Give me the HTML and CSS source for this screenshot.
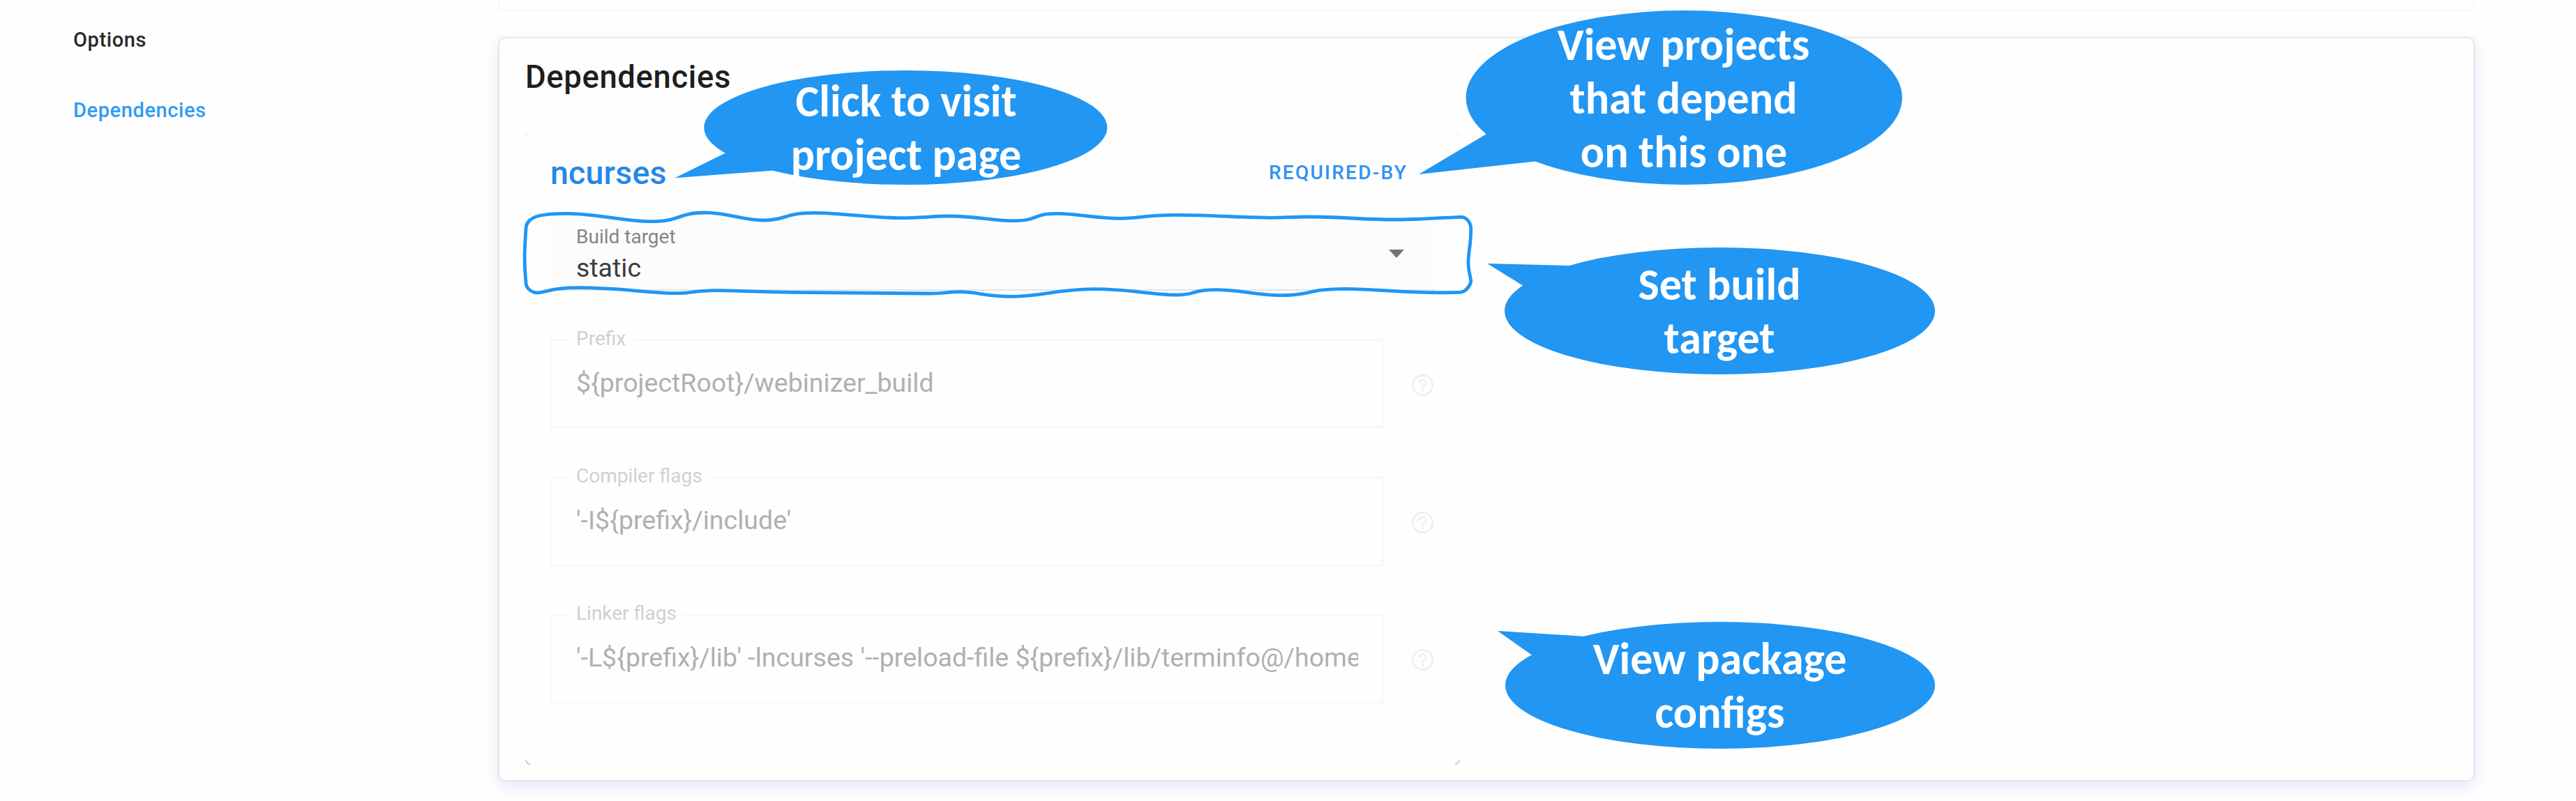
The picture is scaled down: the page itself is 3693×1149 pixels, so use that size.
FILE: index.html
```html
<!DOCTYPE html>
<html lang="en">
<head>
<meta charset="utf-8">
<title>Dependencies</title>
<link rel="stylesheet" href="styles.css">
</head>
<body>
<svg width="0" height="0" class="defs">
  <symbol id="help" viewBox="2 2 20 20"><path d="M11 18h2v-2h-2v2zm1-16C6.480 2 2 6.480 2 12s4.480 10 10 10 10-4.480 10-10S17.520 2 12 2zm0 18.300c-4.580 0-8.300-3.720-8.300-8.300S7.420 3.700 12 3.700s8.300 3.720 8.300 8.300-3.720 8.300-8.300 8.300zM12 6c-2.210 0-4 1.790-4 4h1.700c0-1.270 1.030-2.300 2.300-2.300s2.300 1.030 2.300 2.300c0 1.900-3.150 1.750-3.150 5h1.700c0-2.250 3.150-2.500 3.150-5 0-2.210-1.790-4-4-4z"/></symbol>
</svg>
<nav class="sidebar">
  <a class="nav-item">Options</a>
  <a class="nav-item active">Dependencies</a>
</nav>
<main class="content">
  <section class="card card-prev"></section>
  <section class="card card-main">
    <h2 class="card-title">Dependencies</h2>
    <div class="package">
      <i class="corner tl"></i><i class="corner tr"></i><i class="corner bl"></i><i class="corner br"></i>
      <header class="package-head">
        <a class="package-name">ncurses</a>
        <a class="required-by">REQUIRED-BY</a>
      </header>
      <div class="select">
        <div class="select-text">
          <span class="select-label">Build target</span>
          <span class="select-value">static</span>
        </div>
        <svg class="caret" viewBox="0 0 22 12"><path d="M0 0H22L11 12Z"/></svg>
      </div>
      <div class="fields">
        <div class="field">
          <fieldset><legend>Prefix</legend><div class="value">${projectRoot}/webinizer_build</div></fieldset>
          <svg class="help"><use href="#help"/></svg>
        </div>
        <div class="field">
          <fieldset><legend>Compiler flags</legend><div class="value">'-I${prefix}/include'</div></fieldset>
          <svg class="help"><use href="#help"/></svg>
        </div>
        <div class="field">
          <fieldset><legend>Linker flags</legend><div class="value">'-L${prefix}/lib' -lncurses '--preload-file ${prefix}/lib/terminfo@/home</div></fieldset>
          <svg class="help"><use href="#help"/></svg>
        </div>
      </div>
    </div>
  </section>
</main>
<svg class="annotations" viewBox="0 0 3693 1149">
  <path class="outline" d="M754 328C754 308 784 306 815 306.300C860 307 895 317.700 934 317.700C975 317.700 973 305 1010 305C1045 305 1063 316 1095 316C1127 316 1125 305.300 1166 305.300C1210 305.500 1250 312.700 1292 312.700C1320 312.700 1335 310 1360 310C1400 310 1425 316.700 1453 316.700C1490 316.700 1480 306.300 1514 306.300C1545 306.300 1570 313.300 1606 313.300C1637 313.300 1640 308.300 1686 308.300C1740 308.300 1780 312.300 1822 312.300C1840 312.300 1855 311 1875 311C1920 311 1955 315 2001 315C2040 315 2060 312.500 2094 311.300C2102 311 2109 319 2108.700 329C2109 350 2105 360 2105 377C2105 390 2108.700 397 2108.700 404C2107 412 2100 419 2093 419.300C2020 422 1980 414.300 1928 414.300C1875 414.300 1880 423.700 1836 423.700C1800 423.700 1780 415.700 1744 415.700C1705 415.700 1717 423 1686 423C1650 423 1620 414.700 1570 414.700C1515 414.700 1495 425.300 1448 425.300C1415 425.300 1400 418.700 1377 418.700C1355 418.700 1355 421 1330 421C1290 421 1210 420 1136 419.300C1090 419 1060 416.700 1026 416.700C995 416.700 990 420.700 971 420.700C930 420.700 890 412.700 829 412.700C785 412.700 785 420 769 420C760 419 754 412 754 406C751 370 752 360 754 328Z"/>
  <g class="bubble">
    <ellipse cx="1298.300" cy="183" rx="289" ry="82"/>
    <path d="M967.500 255.300L1039.500 219.700L1200 200L1106.600 244.700Z"/>
    <ellipse cx="2414.300" cy="140" rx="312.700" ry="125"/>
    <path d="M2034 250L2130 192.700L2300 160L2200.800 231.500Z"/>
    <ellipse cx="2465.500" cy="446" rx="308.500" ry="91"/>
    <path d="M2132 378L2183 409.500L2350 450L2250.400 381Z"/>
    <ellipse cx="2466" cy="983" rx="308" ry="91"/>
    <path d="M2147 905L2195.500 939.300L2350 980L2270 912.700Z"/>
  </g>
  <g class="bubble-text">
    <text x="1299" y="167">Click to visit</text>
    <text x="1299" y="243.500">project page</text>
    <text x="2413.500" y="86">View projects</text>
    <text x="2413.500" y="163">that depend</text>
    <text x="2414" y="239.500">on this one</text>
    <text x="2465" y="430">Set build</text>
    <text x="2465" y="507">target</text>
    <text x="2465.500" y="967">View package</text>
    <text x="2465.500" y="1043.500">configs</text>
  </g>
</svg>
</body>
</html>
```
FILE: styles.css
```css
* { box-sizing: border-box; }
body {
  margin: 0;
  height: 1149px;
  display: flex;
  overflow: hidden;
  position: relative;
  background: #fefefe;
  font-family: Roboto, "Liberation Sans", sans-serif;
}
.defs { position: absolute; }
.sidebar {
  width: 714px;
  padding: 37px 0 0 105px;
  display: flex;
  flex-direction: column;
  gap: 61px;
}
.nav-item {
  font-size: 29px;
  line-height: 40px;
  font-weight: 500;
  letter-spacing: .600px;
  color: #2a2a2a;
}
.nav-item.active { color: #2f9bf5; }
.content { width: 2834px; }
.card { background: #fefefe; border: 2.500px solid #e6e6e6; border-radius: 10px; }
.card-prev {
  height: 16px;
  border-color: #f6f6f6;
  border-top: 0;
  border-radius: 0 0 10px 10px;
}
.card-main {
  margin-top: 37px;
  height: 1068px;
  padding: 26px 37px 0;
  box-shadow: 0 7px 20px rgba(70, 110, 230, .15);
}
.card-title {
  margin: 0;
  font-size: 45.500px;
  line-height: 60px;
  font-weight: 500;
  letter-spacing: .600px;
  color: #1e1e1e;
}
.package {
  position: relative;
  width: 1340px;
  height: 909px;
  margin-top: 47px;
  padding: 30px 37px 0 36px;
}
.corner { position: absolute; width: 7px; height: 7px; border: 0 solid #f3f3f3; }
.tl { left: 0; top: 0; border-width: 2px 0 0 2px; border-top-left-radius: 7px; }
.tr { right: 0; top: 0; border-width: 2px 2px 0 0; border-top-right-radius: 7px; }
.bl { left: 0; bottom: 0; border-width: 0 0 2px 2px; border-bottom-left-radius: 7px; border-color: #ccc; }
.br { right: 0; bottom: 0; border-width: 0 2px 2px 0; border-bottom-right-radius: 7px; border-color: #ccc; }
.package-head { display: flex; justify-content: space-between; height: 60px; padding-right: 38px; }
.package-name {
  font-size: 46.500px;
  line-height: 60px;
  font-weight: 500;
  letter-spacing: .200px;
  color: #2488e5;
}
.required-by {
  font-size: 28px;
  line-height: 59px;
  font-weight: 500;
  letter-spacing: 2.250px;
  color: #2f93ee;
}
.select {
  display: flex;
  justify-content: space-between;
  height: 109px;
  width: 1267px;
  margin-top: 30px;
  padding: 0 43px 0 37px;
  background: #fcfcfc;
  border-bottom: 2px solid #e4e4e4;
}
.select-text { display: flex; flex-direction: column; padding-top: 16px; }
.select-label { font-size: 28px; line-height: 32px; color: #858585; }
.select-value { font-size: 37.500px; line-height: 56px; color: #3c3c3c; }
.caret { width: 22px; height: 12px; margin-top: 50px; fill: #757575; }
.fields { display: flex; flex-direction: column; gap: 53.800px; margin-top: 54px; }
.field { display: flex; gap: 41px; height: 143.400px; }
fieldset {
  width: 1194px;
  height: 143.400px;
  margin: 0;
  padding: 0 34px 0 26px;
  border: 2px solid #f6f6f6;
  min-width: 0;
}
legend { padding: 0 11px 3px 9px; font-size: 28px; line-height: 30px; color: #d0d0d0; }
.value {
  margin: 15px 0 0 9px;
  overflow: hidden;
  white-space: nowrap;
  font-size: 37.500px;
  line-height: 60px;
  color: #b0b0b0;
}
.help { width: 31px; height: 31px; margin-top: 66px; fill: #efefef; }
.annotations { position: absolute; left: 0; top: 0; width: 3693px; height: 1149px; }
.outline { fill: none; stroke: #2196f3; stroke-width: 4.800; }
.bubble { fill: #2196f3; }
.bubble-text {
  fill: #fff;
  font-family: Carlito, Calibri, Lato, sans-serif;
  font-size: 64px;
  font-weight: 700;
  text-anchor: middle;
}
```
